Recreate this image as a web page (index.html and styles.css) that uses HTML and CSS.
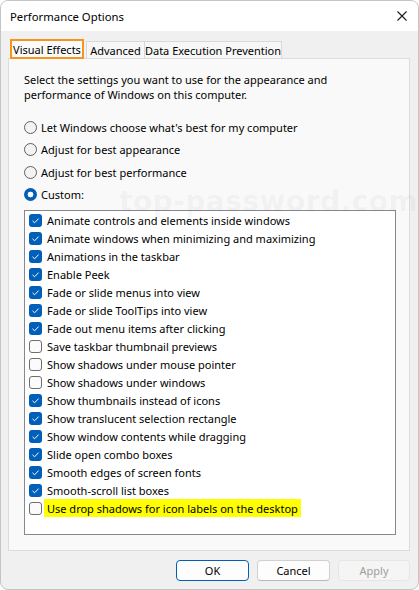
FILE: index.html
```html
<!DOCTYPE html>
<html>
<head>
<meta charset="utf-8">
<link rel="stylesheet" href="styles.css">
</head>
<body>
<div class="window">
  <div class="titlebar">
    <span class="title">Performance Options</span>
    <svg class="close" width="10" height="10" viewBox="0 0 10 10"><path d="M0.5 0.5 L9.5 9.5 M9.5 0.5 L0.5 9.5" stroke="#1a1a1a" stroke-width="1.1" fill="none"/></svg>
  </div>
  <div class="body">
    <div class="tabs">
      <div class="tab active">Visual Effects</div>
      <div class="tab tab-adv">Advanced</div>
      <div class="tab tab-dep">Data Execution Prevention</div>
    </div>
    <div class="panel">
      <p class="desc">Select the settings you want to use for the appearance and<br>performance of Windows on this computer.</p>
      <div class="radios">
        <div class="radio-row"><span class="radio"></span><span>Let Windows choose what's best for my computer</span></div>
        <div class="radio-row"><span class="radio"></span><span>Adjust for best appearance</span></div>
        <div class="radio-row"><span class="radio"></span><span>Adjust for best performance</span></div>
        <div class="radio-row"><span class="radio on"></span><span>Custom:</span></div>
      </div>
      <div class="list">
        <div class="item"><span class="cb on"></span><span>Animate controls and elements inside windows</span></div>
        <div class="item"><span class="cb on"></span><span>Animate windows when minimizing and maximizing</span></div>
        <div class="item"><span class="cb on"></span><span>Animations in the taskbar</span></div>
        <div class="item"><span class="cb on"></span><span>Enable Peek</span></div>
        <div class="item"><span class="cb on"></span><span>Fade or slide menus into view</span></div>
        <div class="item"><span class="cb on"></span><span>Fade or slide ToolTips into view</span></div>
        <div class="item"><span class="cb on"></span><span>Fade out menu items after clicking</span></div>
        <div class="item"><span class="cb"></span><span>Save taskbar thumbnail previews</span></div>
        <div class="item"><span class="cb"></span><span>Show shadows under mouse pointer</span></div>
        <div class="item"><span class="cb"></span><span>Show shadows under windows</span></div>
        <div class="item"><span class="cb on"></span><span>Show thumbnails instead of icons</span></div>
        <div class="item"><span class="cb on"></span><span>Show translucent selection rectangle</span></div>
        <div class="item"><span class="cb on"></span><span>Show window contents while dragging</span></div>
        <div class="item"><span class="cb on"></span><span>Slide open combo boxes</span></div>
        <div class="item"><span class="cb on"></span><span>Smooth edges of screen fonts</span></div>
        <div class="item"><span class="cb on"></span><span>Smooth-scroll list boxes</span></div>
        <div class="item"><span class="cb"></span><span class="hl">Use drop shadows for icon labels on the desktop</span></div>
      </div>
    </div>
    <div class="buttons">
      <button class="btn btn-ok">OK</button>
      <button class="btn btn-cancel">Cancel</button>
      <button class="btn btn-apply" disabled>Apply</button>
    </div>
  </div>
  <div class="watermark">top-password.com</div>
</div>
</body>
</html>
```
FILE: styles.css
```css
* { box-sizing: border-box; }
html, body { margin: 0; padding: 0; background: #ffffff; }
body { font-family: "Noto Sans", "Open Sans", sans-serif; font-size: 11px; color: #1a1a1a; }

.window {
  position: relative;
  width: 419px;
  height: 590px;
  border: 1px solid #c4c4c4;
  border-radius: 8px;
  background: #f0f0f0;
  overflow: hidden;
  display: flex;
  flex-direction: column;
}

.titlebar {
  height: 30px;
  background: #ffffff;
  display: flex;
  align-items: center;
  justify-content: space-between;
  padding: 0 11px 0 9px;
}
.title { font-size: 11.3px; color: #000; }
.close { display: block; margin-top: -1px; }

.body { flex: 1; padding: 8px 8px 0 7px; display: flex; flex-direction: column; }

.tabs { display: flex; align-items: flex-end; padding-left: 2px; height: 19px; }
.tab {
  height: 17px;
  border: 1px solid #d9d9d9;
  border-bottom: none;
  background: #f7f7f7;
  display: flex;
  align-items: center;
  justify-content: center;
  white-space: nowrap;
  color: #000;
}
.tab.active {
  height: 20px;
  width: 74px;
  border: 2px solid #f7941d;
  background: #fafafa;
  position: relative;
  z-index: 1;
  margin-bottom: -1px;
}
.tab-adv { width: 59px; margin-left: 2px; }
.tab-dep { width: 138px; margin-left: -1px; }

.panel {
  height: 493px;
  border: 1px solid #dcdcdc;
  background: #f9f9f9;
  padding: 13px 13px 0 15px;
}

.desc { margin: 0; line-height: 15px; color: #000; }

.radios { margin-top: 14px; display: flex; flex-direction: column; }
.radio-row { height: 22.5px; display: flex; align-items: center; gap: 4px; color: #000; }
.radio {
  width: 13px; height: 13px; border-radius: 50%;
  border: 1px solid #5f5f5f; background: #f3f3f3;
  flex: none;
}
.radio.on {
  border: none;
  background: radial-gradient(circle, #ffffff 0 2.6px, #005fb8 3.2px);
}

.list {
  margin-top: 4px;
  height: 325px;
  border: 1px solid #85888d;
  background: #ffffff;
  padding: 0 0 0 4px;
}
.item { height: 18px; display: flex; align-items: center; gap: 5px; color: #000; white-space: nowrap; }
.cb {
  width: 13px; height: 13px; border-radius: 3px; flex: none;
  border: 1px solid #6e6e6e; background: #fbfbfb;
}
.cb.on {
  border: none;
  background: #005fb8 url("data:image/svg+xml;utf8,<svg xmlns='http://www.w3.org/2000/svg' width='13' height='13'><path d='M3.5 6.8 L5.6 8.8 L9.6 4.6' stroke='white' stroke-width='1' fill='none'/></svg>") no-repeat center;
}
.hl { background: #ffff00; padding: 2px 3px 1px 3px; margin-left: -3px; }

.buttons { display: flex; justify-content: flex-end; gap: 8px; margin-top: 9px; padding-right: 0; }
.btn {
  height: 21px; font-family: inherit; font-size: 11px;
  border-radius: 4px; border: 1px solid #d0d0d0; border-bottom-color: #b8b8b8;
  background: #fdfdfd; color: #000; padding: 0;
}
.btn-ok { width: 73px; border-color: #005fb8; background: #fdfdfd; }
.btn-cancel { width: 73px; }
.btn-apply { width: 72px; background: #f5f5f5; border-color: #e5e5e5; color: #9d9d9d; }

.watermark {
  position: absolute;
  left: 118px;
  top: 184px;
  font-family: "DejaVu Sans", sans-serif;
  font-weight: bold;
  font-size: 28px;
  line-height: 34px;
  white-space: nowrap;
  color: rgba(0, 0, 0, 0.045);
  letter-spacing: 0.5px;
  pointer-events: none;
}
```
